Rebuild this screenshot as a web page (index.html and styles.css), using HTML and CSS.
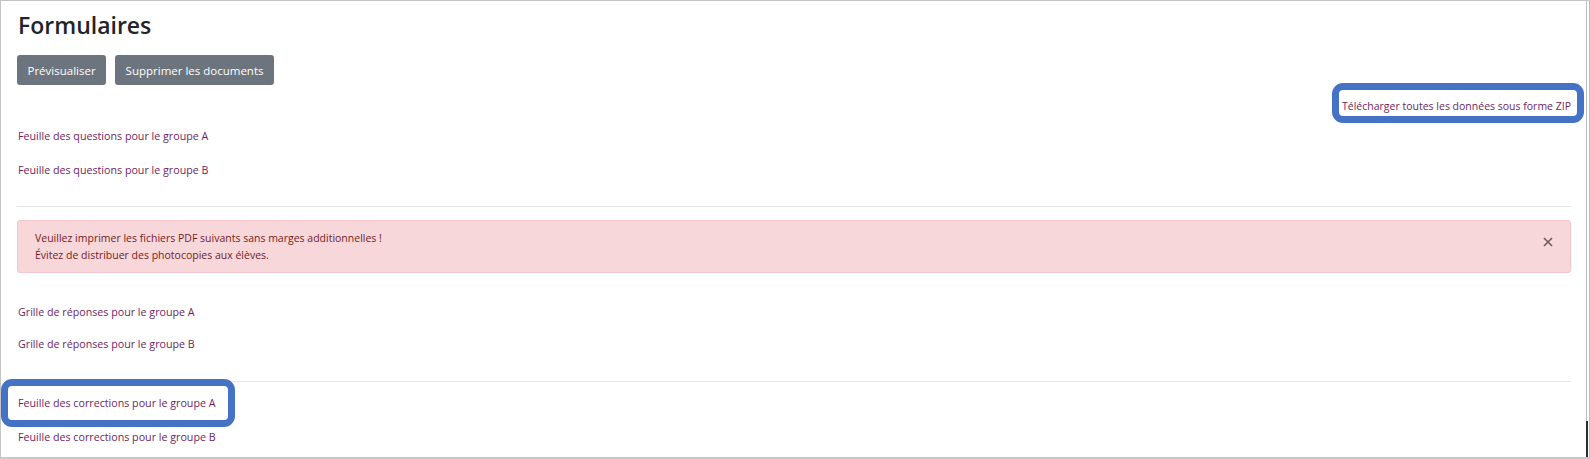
FILE: index.html
```
<!DOCTYPE html>
<html lang="fr">
<head>
	<meta charset="UTF-8">
	<title>Formulaires</title>
<link rel="stylesheet" href="styles.css">
</head>
<body>
	<div class="shot">
		<div class="page">
			<h3 class="title">Formulaires</h3>
			<div class="actions">
				<a href="#" class="btn">Prévisualiser</a>
				<a href="#" class="btn">Supprimer les documents</a>
			</div>
			<div class="zip">
				<a href="#" class="link marked mark-zip">Télécharger toutes les données sous forme ZIP</a>
			</div>
			<div class="row first"><a href="#" class="link">Feuille des questions pour le groupe A</a></div>
			<div class="row"><a href="#" class="link">Feuille des questions pour le groupe B</a></div>
			<hr class="sep sep-1">
			<div class="alert">
				<p>Veuillez imprimer les fichiers PDF suivants sans marges additionnelles !</p>
				<p>Évitez de distribuer des photocopies aux élèves.</p>
				<button class="close" type="button" aria-label="Fermer">
					<svg width="10" height="10" viewBox="0 0 10 10"><path d="M1 1 L9 9 M9 1 L1 9" stroke="currentColor" stroke-width="1.6" fill="none"/></svg>
				</button>
			</div>
			<div class="row grid-a"><a href="#" class="link">Grille de réponses pour le groupe A</a></div>
			<div class="row grid-b"><a href="#" class="link">Grille de réponses pour le groupe B</a></div>
			<hr class="sep sep-2">
			<div class="row corr-a"><a href="#" class="link marked mark-corr">Feuille des corrections pour le groupe A</a></div>
			<div class="row corr-b"><a href="#" class="link">Feuille des corrections pour le groupe B</a></div>
		</div>
		<div class="thumb"></div>
	</div>
</body>
</html>
```
FILE: styles.css
```
* {
	margin: 0;
	padding: 0;
	box-sizing: border-box;
}
body {
	background: #fff;
	font-family: "Open Sans", "Noto Sans", sans-serif;
	color: #212529;
}
.shot {
	position: relative;
	width: 1590px;
	height: 459px;
	border-left: 1px solid #c4c4c4;
	border-top: 1px solid #c4c4c4;
	border-right: 1px solid #bdbdbd;
	border-bottom: 2px solid #c8c8c8;
	overflow: hidden;
}
.page {
	height: 100%;
	margin-right: 2px;
	border-right: 1px solid #bdbdbd;
	padding: 0 15px 0 16px;
}
.thumb {
	position: absolute;
	right: 1px;
	bottom: 0;
	width: 2px;
	height: 36px;
	background: #2b2b2b;
}
.title {
	height: 47px;
	display: flex;
	align-items: center;
	padding-left: 1px;
	font-size: 23px;
	font-weight: 600;
	color: #212529;
}
.actions {
	display: flex;
	gap: 9px;
	margin-top: 7px;
}
.btn {
	height: 30px;
	display: flex;
	align-items: center;
	padding: 0 10.5px;
	background: #6c757d;
	border-radius: 3px;
	color: #fff;
	font-size: 11.5px;
	text-decoration: none;
}
.link {
	position: relative;
	color: #6e1f63;
	font-size: 10.7px;
	text-decoration: none;
	z-index: 1;
}
.zip {
	height: 21px;
	margin-top: 10px;
	display: flex;
	align-items: center;
	justify-content: flex-end;
}
.zip .link {
	font-size: 10.5px;
}
.row {
	height: 21px;
	display: flex;
	align-items: center;
	margin-top: 13px;
	padding-left: 1px;
}
.row.first {
	margin-top: 9px;
}
.sep {
	border: 0;
	border-top: 1px solid #e5e5e5;
}
.sep-1 {
	margin-top: 26px;
}
.alert {
	position: relative;
	margin-top: 13px;
	height: 53px;
	padding: 9px 17px 8px;
	background: #f8d7da;
	border: 1px solid #f5c6cb;
	border-radius: 3px;
	color: #721c24;
	font-size: 10.5px;
	line-height: 17px;
}
.close {
	position: absolute;
	right: 17px;
	top: 16px;
	border: 0;
	background: none;
	color: #6f5a5d;
	display: flex;
}
.row.grid-a {
	margin-top: 28px;
}
.row.grid-b {
	margin-top: 11px;
}
.sep-2 {
	margin-top: 27px;
}
.row.corr-a {
	margin-top: 10px;
}
.row.corr-b {
	margin-top: 13px;
}
.marked::before {
	content: "";
	position: absolute;
	z-index: -1;
	background: #fff;
	border: 7px solid #4472c4;
	border-radius: 11px;
}
.mark-zip::before {
	left: -10px;
	right: -13px;
	top: -16px;
	bottom: -10px;
}
.mark-corr::before {
	left: -17px;
	right: -19px;
	top: -17px;
	bottom: -17px;
}
```
